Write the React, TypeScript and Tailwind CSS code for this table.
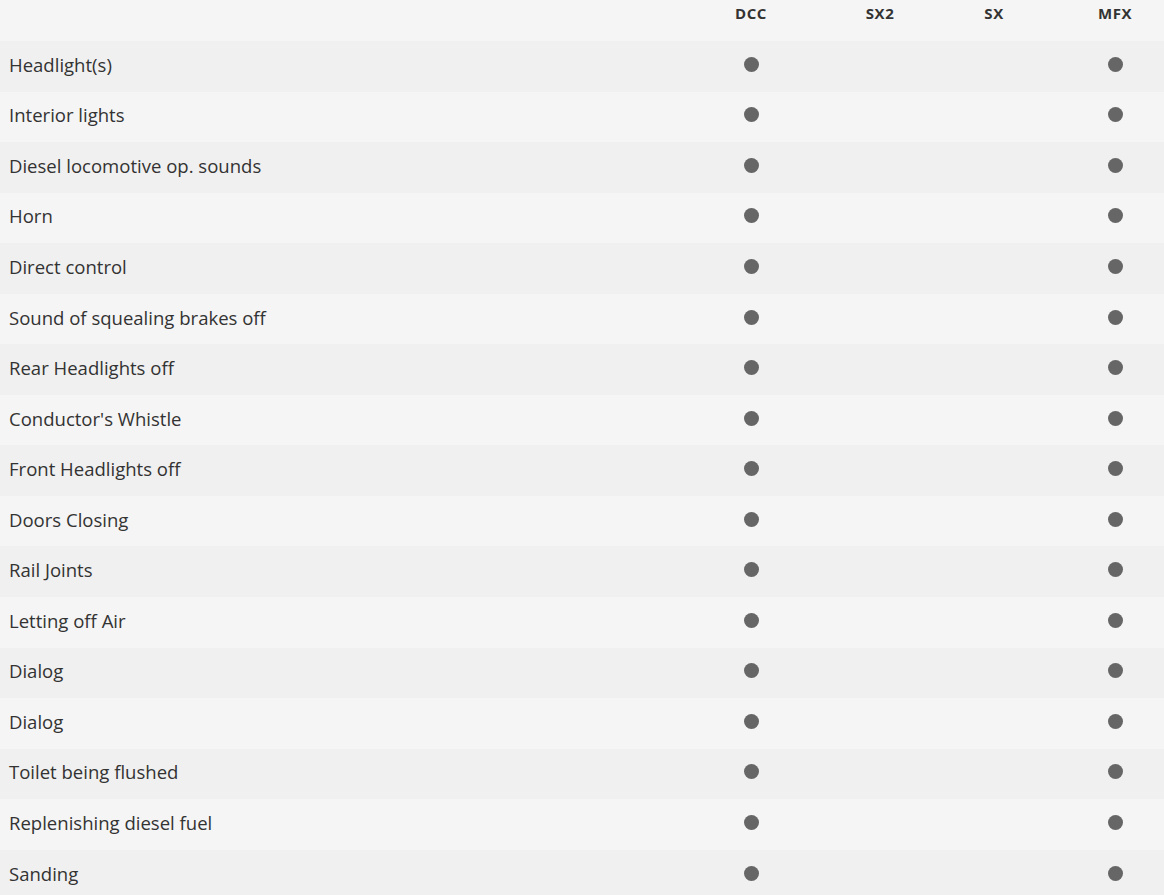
import React from "react";

const rows = [
  "Headlight(s)",
  "Interior lights",
  "Diesel locomotive op. sounds",
  "Horn",
  "Direct control",
  "Sound of squealing brakes off",
  "Rear Headlights off",
  "Conductor's Whistle",
  "Front Headlights off",
  "Doors Closing",
  "Rail Joints",
  "Letting off Air",
  "Dialog",
  "Dialog",
  "Toilet being flushed",
  "Replenishing diesel fuel",
  "Sanding",
];

const Dot = () => <span className="block w-[15px] h-[15px] rounded-full bg-[#666666] mb-[4px]" />;

export default function App() {
  return (
    <div
      className="w-[1164px] h-[895px] overflow-hidden bg-[#f5f5f5] text-[#333333]"
      style={{ fontFamily: '"Open Sans", "Noto Sans", sans-serif' }}
    >
      <div className="grid grid-cols-[1fr_174px_84px_144px_98px] h-[41px] items-start pt-[3px] text-[15px] font-bold leading-[20px] tracking-[0.6px]">
        <div />
        <div className="text-center">DCC</div>
        <div className="text-center">SX2</div>
        <div className="text-center">SX</div>
        <div className="text-center">MFX</div>
      </div>
      {rows.map((r, i) => (
        <div
          key={i}
          className={
            "grid grid-cols-[1fr_174px_84px_144px_98px] h-[50.56px] items-center text-[18.55px] leading-[26px] " +
            (i % 2 === 0 ? "bg-[#f0f0f0]" : "bg-[#f5f5f5]")
          }
        >
          <div className="pl-[9px] pb-[3px]">{r}</div>
          <div className="flex justify-center"><Dot /></div>
          <div />
          <div />
          <div className="flex justify-center"><Dot /></div>
        </div>
      ))}
    </div>
  );
}
